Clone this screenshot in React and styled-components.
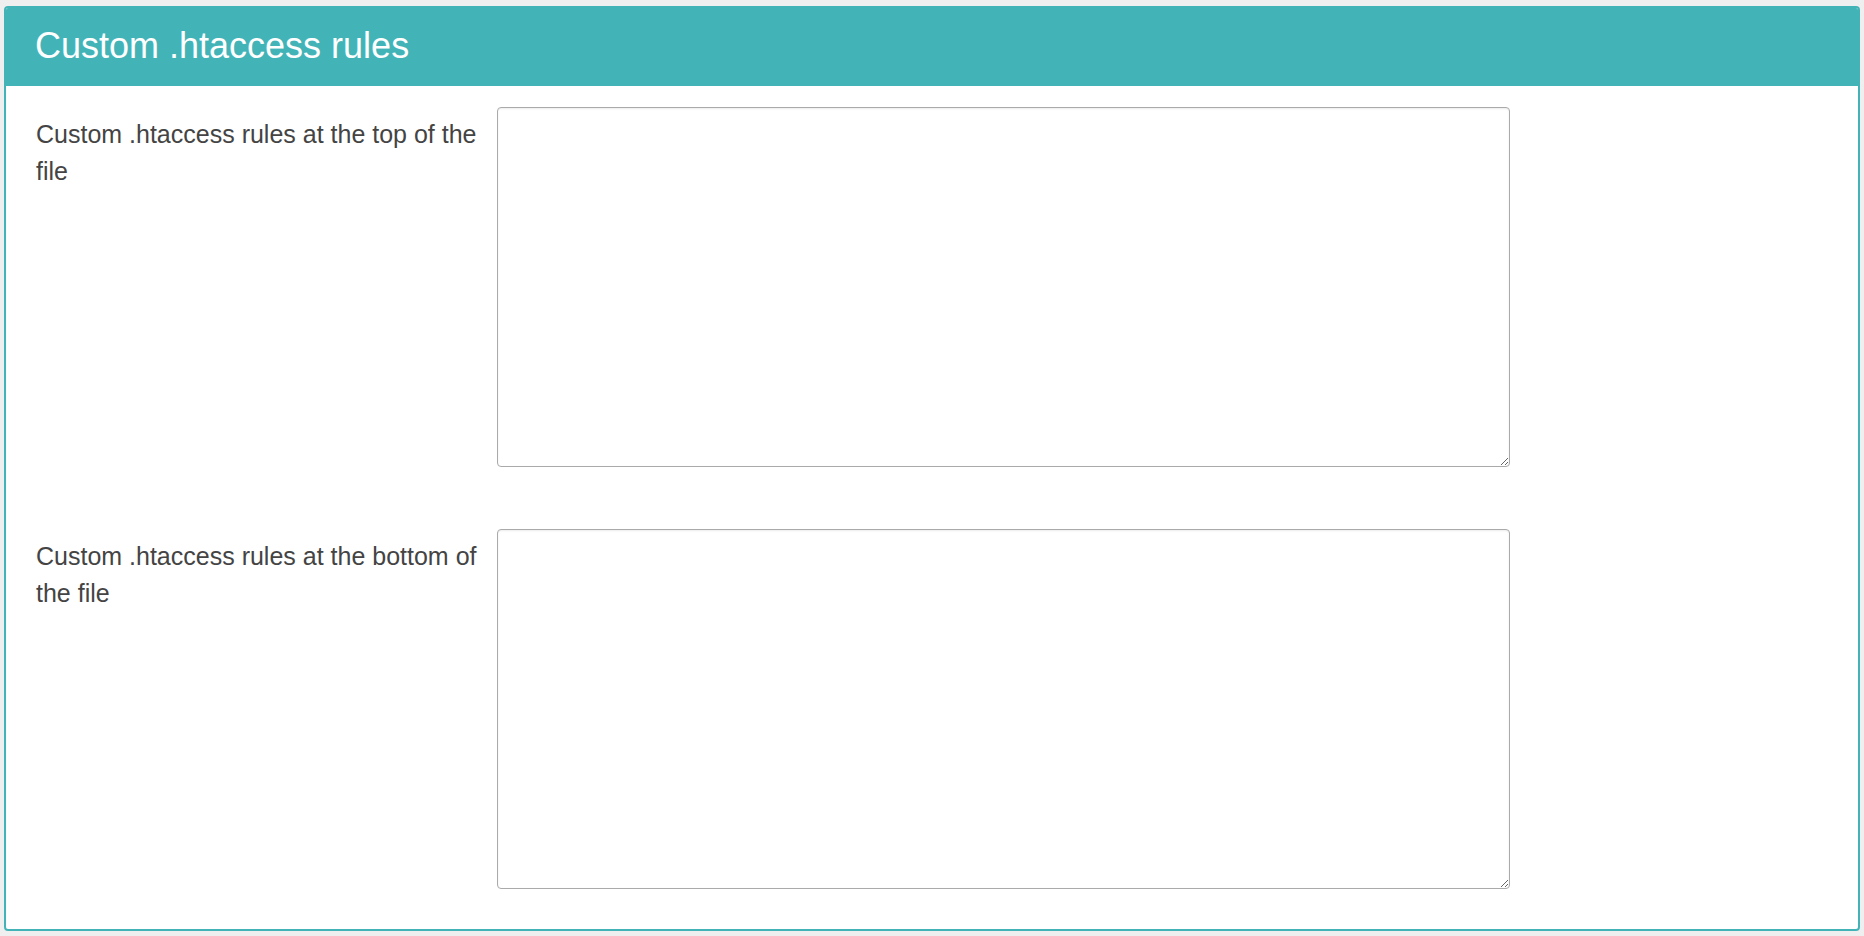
import React from "react";
import styled, { createGlobalStyle } from "styled-components";

const GlobalStyle = createGlobalStyle`
  html, body {
    margin: 0;
    padding: 0;
    background: #efefef;
    font-family: "Liberation Sans", Arial, Helvetica, sans-serif;
  }
  * {
    box-sizing: border-box;
  }
`;

const Page = styled.div`
  padding: 6px 4px 5px;
`;

const Panel = styled.section`
  border: 2px solid #42b4b8;
  border-radius: 4px;
  background: #fff;
  overflow: hidden;
`;

const PanelHeading = styled.header`
  background-color: #42b4b8;
  height: 78px;
  padding: 0 29px;
`;

const PanelTitle = styled.h3`
  margin: 0;
  color: #fff;
  font-size: 36px;
  font-weight: 400;
  line-height: 76px;
`;

const PanelBody = styled.div`
  display: flex;
  flex-direction: column;
  gap: 62px;
  padding: 21px 28px 40px 30px;
`;

const FormRow = styled.div`
  display: grid;
  grid-template-columns: 446px 1013px;
  column-gap: 15px;
  align-items: start;
`;

const Label = styled.label`
  padding-top: 9px;
  color: #444;
  font-size: 25px;
  line-height: 37px;
`;

const TextArea = styled.textarea`
  display: block;
  width: 100%;
  height: 360px;
  padding: 8px 12px;
  border: 1px solid #aaa;
  border-radius: 4px;
  box-shadow: inset 0 1px 2px rgba(0, 0, 0, 0.08);
  font-family: "Liberation Mono", monospace;
  font-size: 16px;
  color: #444;
  background: #fff;
  resize: vertical;
  outline: none;
`;

const rules = [
  { id: "top", label: "Custom .htaccess rules at the top of the file" },
  { id: "bottom", label: "Custom .htaccess rules at the bottom of the file" },
];

const App = () => {
  return (
    <Page>
      <GlobalStyle />
      <Panel>
        <PanelHeading>
          <PanelTitle>Custom .htaccess rules</PanelTitle>
        </PanelHeading>
        <PanelBody>
          {rules.map((rule) => (
            <FormRow key={rule.id}>
              <Label htmlFor={`htaccess-${rule.id}`}>{rule.label}</Label>
              <TextArea id={`htaccess-${rule.id}`} />
            </FormRow>
          ))}
        </PanelBody>
      </Panel>
    </Page>
  );
};

export default App;
